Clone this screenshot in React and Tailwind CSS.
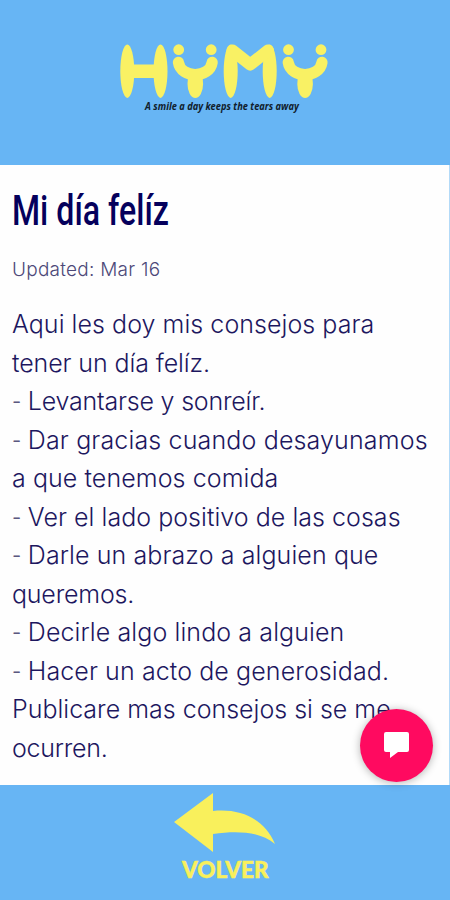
import { useState } from 'react';

const POST = {
  title: 'Mi día felíz',
  updated: 'Updated: Mar 16',
  lines: [
    { text: 'Aqui les doy mis consejos para', spacing: 'tracking-[0.05px]' },
    { text: 'tener un día felíz.', spacing: 'tracking-[-0.1px]' },
    { text: 'Levantarse y sonreír.', spacing: 'tracking-[-0.2px]', item: true },
    { text: 'Dar gracias cuando desayunamos', spacing: 'tracking-[0.15px]', item: true },
    { text: 'a que tenemos comida', spacing: 'tracking-[0.08px]' },
    { text: 'Ver el lado positivo de las cosas', spacing: 'tracking-[0.04px]', item: true },
    { text: 'Darle un abrazo a alguien que', spacing: 'tracking-[0.1px]', item: true },
    { text: 'queremos.', spacing: 'tracking-[-0.2px]' },
    { text: 'Decirle algo lindo a alguien', spacing: 'tracking-[0.1px]', item: true },
    { text: 'Hacer un acto de generosidad.', spacing: 'tracking-[0.1px]', item: true },
    { text: 'Publicare mas consejos si se me', spacing: 'tracking-[0px]' },
    { text: 'ocurren.', spacing: 'tracking-[-0.25px]' },
  ],
};

// little figure with two eyes and a smile
function Smiley({ x }) {
  return (
    <g transform={`translate(${x} 0)`}>
      <circle cx="6" cy="5.7" r="5.4" />
      <circle cx="38.5" cy="5.7" r="5.4" />
      <path d="M5.7 18.3C8 34.7 37 34.7 39.5 18.3" fill="none" stroke="#f9f164" strokeWidth="11.2" strokeLinecap="round" />
      <ellipse cx="22.6" cy="40" rx="7.8" ry="14" />
    </g>
  );
}

function Logo() {
  return (
    <svg width="210" height="55" viewBox="0 0 210 55" fill="#f9f164" role="img" aria-label="HYMY">
      <ellipse cx="8.3" cy="27.2" rx="7" ry="26.7" />
      <ellipse cx="41.5" cy="27.2" rx="7" ry="26.7" />
      <rect x="8" y="20.5" width="33" height="13.5" />
      <Smiley x={53.7} />
      <ellipse cx="111.7" cy="27.2" rx="7" ry="26.7" />
      <ellipse cx="150.7" cy="27.2" rx="7" ry="26.7" />
      <polyline points="113.5,6.5 131.2,20.5 149,6.5" fill="none" stroke="#f9f164" strokeWidth="12" strokeLinecap="round" strokeLinejoin="round" />
      <Smiley x={163.5} />
    </svg>
  );
}

function ChatButton({ onClick }) {
  return (
    <button
      type="button"
      onClick={onClick}
      aria-label="Chat"
      className="absolute right-4 bottom-[3px] flex h-[73px] w-[73px] items-center justify-center rounded-full bg-[#ff0a60] shadow-[0_1px_8px_rgba(0,0,0,0.3)]"
    >
      <svg width="25" height="27" viewBox="0 0 25 27" fill="#ffffff">
        <path d="M2 0H23Q25 0 25 2V18Q25 20 23 20H14L6 26V20H2Q0 20 0 18V2Q0 0 2 0Z" />
      </svg>
    </button>
  );
}

export default function App() {
  const [chatOpen, setChatOpen] = useState(false);

  return (
    <div className="flex h-[900px] w-[450px] flex-col overflow-hidden bg-[#67b5f4]">
      <header className="flex h-[165px] shrink-0 flex-col items-center pt-[44px] pr-[2px]">
        <Logo />
        <p className="mr-[4px] origin-center scale-x-[0.845] whitespace-nowrap font-['Noto_Sans',sans-serif] text-[11px] leading-[14px] font-bold italic text-[#10202c]">
          A smile a day keeps the tears away
        </p>
      </header>

      <main className="relative h-[620px] shrink-0 border-r border-[#b3daf8] bg-[#fefefe] px-3 text-[#1d175f]">
        <h1 className="origin-left scale-x-[0.765] pt-[21px] whitespace-nowrap font-['Roboto',sans-serif] text-[42px] leading-[50px] font-medium text-[#05005c]">
          {POST.title}
        </h1>
        <p className="mt-[22px] font-['Inter',sans-serif] text-[19px] leading-6 font-light tracking-[0.25px] text-[#4c4878]">{POST.updated}</p>
        <div className="mt-[23px] font-['Inter',sans-serif] text-[25px] leading-[38.55px] font-light">
          {POST.lines.map(line => (
            <p key={line.text} className={`whitespace-nowrap ${line.spacing}`}>
              {line.item && <span className="inline-block w-[15.8px] origin-left scale-x-[0.82] text-[#5c587f]">-</span>}
              {line.text}
            </p>
          ))}
        </div>
        <ChatButton onClick={() => setChatOpen(!chatOpen)} />
      </main>

      <footer className="flex h-[115px] shrink-0 justify-center pt-[8px]">
        <button type="button" className="flex flex-col items-center text-[#f9f05c]">
          <svg width="102" height="60" viewBox="0 0 102 60" fill="currentColor">
            <path d="M0 29L39 0V18C68 15 91 27 101 51C86 39 65 37 39 41V59Z" />
          </svg>
          <span className="scale-x-[0.975] font-['Lato',sans-serif] text-[23px] leading-[32px] font-black [-webkit-text-stroke:0.5px_#f9f05c]">VOLVER</span>
        </button>
      </footer>
    </div>
  );
}
